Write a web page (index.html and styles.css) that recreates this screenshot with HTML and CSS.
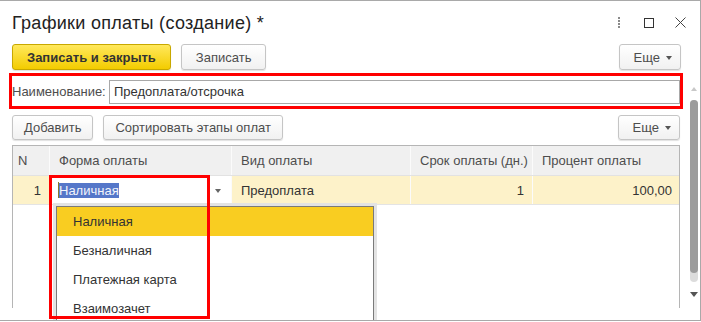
FILE: index.html
```html
<!DOCTYPE html>
<html lang="ru">
<head>
<meta charset="utf-8">
<link rel="stylesheet" href="styles.css">
</head>
<body>
<div class="window">
  <div class="titlebar">
    <h1 class="title">Графики оплаты (создание) *</h1>
    <div class="win-icons">
      <svg class="ico-dots" width="4" height="12" viewBox="0 0 4 12"><g fill="#8a8a8a"><rect x="1" y="0" width="2" height="2"/><rect x="1" y="3" width="2" height="2"/><rect x="1" y="6" width="2" height="2"/><rect x="1" y="9" width="2" height="2"/></g></svg>
      <svg class="ico-max" width="10" height="10" viewBox="0 0 10 10"><rect x="0.5" y="0.5" width="9" height="9" fill="none" stroke="#333" stroke-width="1"/></svg>
      <svg class="ico-close" width="11" height="11" viewBox="0 0 11 11"><path d="M0.5 0.5 L10.5 10.5 M10.5 0.5 L0.5 10.5" stroke="#444" stroke-width="1" fill="none"/></svg>
    </div>
  </div>

  <div class="toolbar">
    <button class="btn btn-primary">Записать и закрыть</button>
    <button class="btn">Записать</button>
    <span class="spacer"></span>
    <button class="btn btn-more">Еще <span class="tri"></span></button>
  </div>

  <div class="body">
    <div class="content">
      <div class="name-row">
        <label class="name-label">Наименование:</label>
        <div class="name-input">Предоплата/отсрочка</div>
      </div>

      <div class="toolbar2">
        <button class="btn">Добавить</button>
        <button class="btn">Сортировать этапы оплат</button>
        <span class="spacer"></span>
        <button class="btn btn-more">Еще <span class="tri"></span></button>
      </div>

      <div class="table">
        <div class="row head">
          <div class="cell c-n">N</div>
          <div class="cell">Форма оплаты</div>
          <div class="cell">Вид оплаты</div>
          <div class="cell">Срок оплаты (дн.)</div>
          <div class="cell">Процент оплаты</div>
        </div>
        <div class="row data">
          <div class="cell num">1</div>
          <div class="cell edit"><span class="caret"></span><span class="sel">Наличная</span><span class="spacer"></span><span class="tri dd"></span></div>
          <div class="cell">Предоплата</div>
          <div class="cell num">1</div>
          <div class="cell num">100,00</div>
        </div>
      </div>
    </div>
    <div class="scrollbar">
      <span class="arrow-up"></span>
      <div class="track"><div class="thumb"></div></div>
      <span class="arrow-down"></span>
    </div>
  </div>

  <ul class="dropdown">
    <li class="active">Наличная</li>
    <li>Безналичная</li>
    <li>Платежная карта</li>
    <li>Взаимозачет</li>
  </ul>
  <div class="mark"></div>
</div>
</body>
</html>
```

FILE: styles.css
```css
* { box-sizing: border-box; }
html, body { margin: 0; padding: 0; background: #fff; }
body {
  width: 701px;
  height: 322px;
  overflow: hidden;
  font-family: "Liberation Sans", Arial, sans-serif;
  font-size: 13px;
  color: #4d4d4d;
}
.window {
  position: relative;
  width: 701px;
  height: 321px;
  border-top: 1px solid #a9a9a9;
  border-right: 1px solid #a9a9a9;
  border-bottom: 1px solid #a9a9a9;
  overflow: hidden;
}
.titlebar {
  height: 43px;
  display: flex;
  align-items: center;
  padding: 0 14px 0 12px;
}
.title {
  margin: 0;
  font-size: 18px;
  letter-spacing: 0.3px;
  font-weight: normal;
  color: #222;
  flex: 1;
  padding-top: 1px;
}
.win-icons { display: flex; align-items: center; }
.ico-dots { margin-right: 23px; }
.ico-max { margin-right: 21px; }
.toolbar {
  display: flex;
  align-items: center;
  height: 26px;
  padding: 0 19px 0 12px;
  gap: 10px;
}
.spacer { flex: 1; }
.btn {
  font-family: inherit;
  font-size: 13px;
  color: #4d4d4d;
  height: 26px;
  padding: 0 14px;
  border: 1px solid #c5c5c5;
  border-radius: 3px;
  background: linear-gradient(#ffffff, #f1f1f1);
  box-shadow: 0 1px 1px rgba(0,0,0,0.12);
  display: inline-flex;
  align-items: center;
  white-space: nowrap;
}
.btn-primary {
  font-weight: bold;
  color: #333;
  background: linear-gradient(#ffe85c, #f3cc00);
  border-color: #c8a800;
  padding: 0 14px;
}
.btn-more { padding: 0 8px 0 14px; gap: 6px; }
.tri {
  display: inline-block;
  width: 0; height: 0;
  border-left: 3px solid transparent;
  border-right: 3px solid transparent;
  border-top: 4px solid #555;
  margin-top: 1px;
}
.body {
  display: flex;
  height: 250px;
}
.content {
  width: 686px;
  padding-right: 6px;
}
.name-row {
  margin: 3px 0 0 9px;
  width: 674px;
  height: 36px;
  border: 3px solid #f00;
  display: flex;
  align-items: flex-start;
  padding-top: 4px;
}
.name-label {
  width: 97px;
  line-height: 24px;
  white-space: nowrap;
}
.name-input {
  flex: 1;
  height: 24px;
  border: 1px solid #a8a8a8;
  padding: 0 4px;
  line-height: 22px;
  color: #333;
}
.toolbar2 {
  display: flex;
  align-items: center;
  height: 25px;
  margin-top: 6px;
  padding-left: 12px;
  gap: 10px;
}
.toolbar2 .btn { height: 25px; padding: 0 11px; }
.toolbar2 .btn-more { padding: 0 8px 0 14px; }
.table {
  margin: 5px 0 0 12px;
  height: 163px;
  border-top: 1px solid #b5b5b5;
  border-left: 1px solid #b5b5b5;
  border-right: 1px solid #b5b5b5;
}
.row {
  display: grid;
  grid-template-columns: 36px 182px 179px 122px 148px;
}
.row.head { height: 29px; background: #f0f0f0; }
.row.data { height: 30px; background: #fdf2c9; border-top: 1px solid #e2e2e2; border-bottom: 1px solid #e4e4e4; }
.cell {
  display: flex;
  align-items: center;
  padding: 0 9px;
  border-left: 1px solid #fbfbfb;
  white-space: nowrap;
}
.cell:first-child { border-left: none; }
.head .cell { padding-left: 9px; }
.head .c-n { padding-left: 5px; }
.num { justify-content: flex-end; padding-right: 8px; color: #333; }
.data .cell { color: #333; }
.edit { background: #fff; padding-left: 8px; padding-right: 10px; }
.caret { width: 1px; height: 16px; background: #8a7a2a; }
.sel {
  background: #5577c9;
  color: #f2f4fb;
  line-height: 15px;
}
.tri.dd { border-top-color: #666; }
.scrollbar {
  width: 14px;
  display: flex;
  flex-direction: column;
  align-items: center;
  padding-top: 17px;
}
.arrow-up {
  width: 0; height: 0;
  border-left: 3px solid transparent;
  border-right: 3px solid transparent;
  border-bottom: 4px solid #c8c8c8;
  margin-left: 1px;
}
.track {
  margin-top: 9px;
  width: 8px;
  height: 182px;
  border-radius: 4px;
  background: #dcdcdc;
  margin-left: 1px;
}
.thumb {
  height: 173px;
  border-radius: 4px;
  background: #9c9c9c;
}
.arrow-down {
  margin-top: 10px;
  width: 0; height: 0;
  border-left: 4px solid transparent;
  border-right: 4px solid transparent;
  border-top: 5px solid #555;
  margin-left: 1px;
}
.dropdown {
  position: absolute;
  left: 56px;
  top: 205px;
  width: 318px;
  height: 130px;
  margin: 0;
  padding: 0;
  list-style: none;
  background: #fff;
  border: 1px solid #7a7a7a;
  box-shadow: 0 0 0 3px #e3e3e3;
}
.dropdown li {
  height: 29px;
  line-height: 30px;
  padding-left: 16px;
  color: #333;
}
.dropdown li.active { background: #f9cd21; }
.mark {
  position: absolute;
  left: 49px;
  top: 174px;
  width: 161px;
  height: 144px;
  border: 3px solid #f00;
}
```
